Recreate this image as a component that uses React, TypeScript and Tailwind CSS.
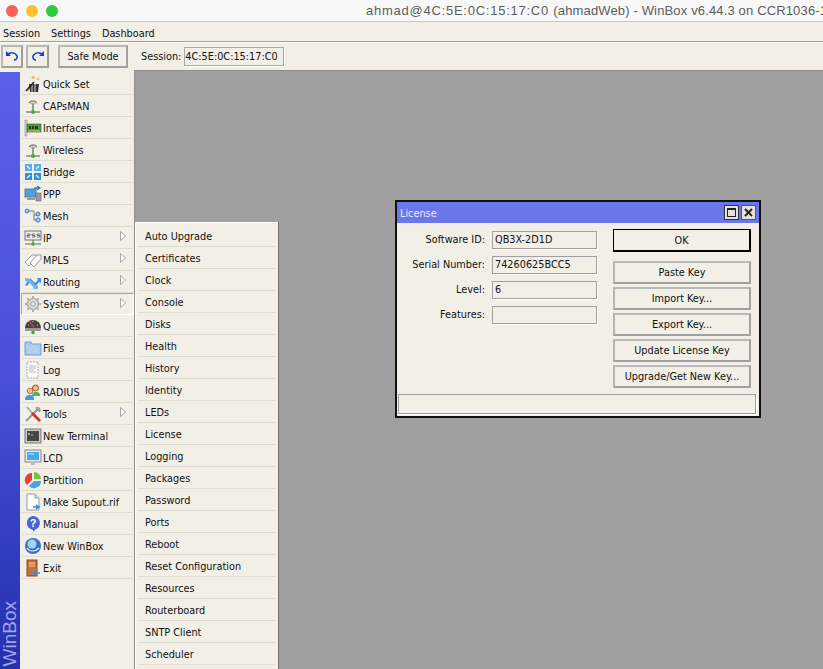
import React from "react";

const T = "[font-family:'DejaVu_Sans_Condensed','Noto_Sans',sans-serif]";

const S = ({ children }: { children: React.ReactNode }) => (
  <svg width="18" height="18" viewBox="0 0 18 18" className="shrink-0">{children}</svg>
);

const Antenna = () => (
  <S>
    <path d="M5 6a5 5 0 0 1 8 0" fill="none" stroke="#8a8a8a" strokeWidth="1.3" />
    <path d="M7 7a2.6 2.6 0 0 1 4 0" fill="none" stroke="#a0a0a0" strokeWidth="1.2" />
    <path d="M9 7v7" stroke="#777" strokeWidth="1.4" />
    <path d="M2 15h14" stroke="#555" />
    <circle cx="9" cy="15" r="2" fill="#3fae3a" />
  </S>
);

const icons: Record<string, React.ReactNode> = {
  "Quick Set": (
    <S>
      <path d="M5 9h10l-1 8H6z" fill="#333" />
      <path d="M8 9v8M11 9v8" stroke="#ddd" />
      <path d="M2 16L10 7" stroke="#222" strokeWidth="1.6" />
      <path d="M10 7l2-2" stroke="#eee" strokeWidth="1.6" />
      <path d="M9 0l1 2 2 .5-2 .5-1 2-.5-2-2-.5 2-.5zM14 2l.6 1.4 1.4.6-1.4.6-.6 1.4-.6-1.4-1.4-.6 1.4-.6z" fill="#f0b030" />
    </S>
  ),
  "CAPsMAN": <Antenna />,
  Interfaces: (
    <S>
      <path d="M1 1h2v16H1z" fill="#ddd" stroke="#888" strokeWidth=".6" />
      <rect x="3" y="5" width="14" height="8" fill="#4b9a4b" stroke="#2d6a2d" strokeWidth=".6" />
      <path d="M5 7h2v3H5zM8 7h2v3H8zM11 7h3v3h-3z" fill="#1d3d1d" />
      <path d="M4 12h12" stroke="#e0c040" />
    </S>
  ),
  Wireless: <Antenna />,
  Bridge: (
    <S>
      <rect x="1" y="1" width="7" height="7" fill="#58aee8" />
      <rect x="10" y="1" width="7" height="7" fill="#58aee8" />
      <rect x="1" y="10" width="7" height="7" fill="#2f8fd8" />
      <rect x="10" y="10" width="7" height="7" fill="#2f8fd8" />
      <path d="M3 3l3 3M15 3l-3 3M3 15l3-3M15 15l-3-3" stroke="#dff1ff" strokeWidth="1.4" />
    </S>
  ),
  PPP: (
    <S>
      <rect x="1" y="4" width="11" height="8" fill="#4aa0e0" stroke="#777" />
      <path d="M5 12v2h4v-2" fill="#aaa" />
      <rect x="12" y="8" width="5" height="8" fill="#999" stroke="#666" strokeWidth=".6" />
      <path d="M3 14h8" stroke="#999" strokeWidth="2" />
      <path d="M10 3h5M13 1l3 2-3 2" fill="none" stroke="#3080d0" strokeWidth="1.3" />
    </S>
  ),
  Mesh: (
    <S>
      <path d="M4 4h6v9h4M10 8h4" fill="none" stroke="#777" />
      <circle cx="3" cy="4" r="2" fill="#9cc8f4" stroke="#3a7fd0" />
      <circle cx="14" cy="7" r="2" fill="#9cc8f4" stroke="#3a7fd0" />
      <circle cx="14" cy="13" r="2.2" fill="#9cc8f4" stroke="#3a7fd0" />
    </S>
  ),
  IP: (
    <S>
      <rect x="1" y="2" width="16" height="9" fill="#eee" stroke="#777" />
      <path d="M3 5h3v1.500H3V8h3M8 5h3M8 5v1.500h3V8H8M13 5h3M13 5v1.500h3V8h-3" fill="none" stroke="#555" strokeWidth=".8" />
      <path d="M9 11v3M1 15h16" stroke="#666" />
      <circle cx="9" cy="15" r="1.800" fill="#3fae3a" />
    </S>
  ),
  MPLS: (
    <S>
      <path d="M1 11l7-7 4 0 0 4-7 7z" fill="#fff" stroke="#999" />
      <path d="M6 12l7-8 4 0 0 4-7 8z" fill="#f6f6f6" stroke="#999" />
    </S>
  ),
  Routing: (
    <S>
      <path d="M1 12l5-7 5 5 3-3-1-2 4 0 0 5-2-1-4 5-5-5-3 4z" fill="#3f8fdc" />
      <path d="M1 5l5 1 6 7 2-1v4l-5 0 1-1-5-6-4-1z" fill="#68b4ee" />
    </S>
  ),
  System: (
    <S>
      <circle cx="9" cy="9" r="5.500" fill="#ddd" stroke="#999" strokeWidth="1.200" />
      <circle cx="9" cy="9" r="2.200" fill="#f2efe7" stroke="#999" />
      <path d="M9 1v3M9 14v3M1 9h3M14 9h3M3.300 3.300l2 2M12.700 12.700l2 2M14.700 3.300l-2 2M5.300 12.700l-2 2" stroke="#aaa" strokeWidth="1.800" />
    </S>
  ),
  Queues: (
    <S>
      <path d="M1 11a8 8 0 0 1 16 0z" fill="#444" />
      <path d="M1 11h16v3H1z" fill="#999" />
      <path d="M5 4l5 6" stroke="#e04040" strokeWidth="1.200" />
      <path d="M4 8h1M13 8h1M9 4v1" stroke="#ccc" />
      <circle cx="9" cy="15.500" r="1.800" fill="#3fae3a" />
    </S>
  ),
  Files: (
    <S>
      <path d="M1 3h6l1 2h9v11H1z" fill="#a8cdf0" stroke="#6f9fd0" />
      <path d="M3 8h1M6 10h1M9 8h1M12 11h1M5 13h1M10 13h1" stroke="#e8f3fc" />
    </S>
  ),
  Log: (
    <S>
      <path d="M3 1h11v16H3z" fill="#fbfbfb" stroke="#aaa" strokeDasharray="2 1" />
      <path d="M5 5h7M5 7h7M5 9h5M5 11h7" stroke="#bbb" />
    </S>
  ),
  RADIUS: (
    <S>
      <circle cx="6" cy="8" r="2.800" fill="#f0c090" stroke="#553" strokeWidth=".6" />
      <path d="M1 17c0-4 2-5 5-5s4 1 4 5z" fill="#5090e0" />
      <circle cx="11.500" cy="5" r="3" fill="#f0c090" stroke="#b04020" />
      <path d="M8 13c0-3 1-4 4-4s4 1 4 4z" fill="#50b060" />
    </S>
  ),
  Tools: (
    <S>
      <path d="M2 16L14 4" stroke="#9a9a9a" strokeWidth="2.200" />
      <path d="M12 2.500a3 3 0 0 1 4 4l-2-.500-1.500-1.500z" fill="#aaa" stroke="#666" strokeWidth=".5" />
      <path d="M3 2l5 6" stroke="#aaa" strokeWidth="1.800" />
      <path d="M8 8l8 8" stroke="#d83030" strokeWidth="2.800" />
    </S>
  ),
  "New Terminal": (
    <S>
      <rect x="1" y="2" width="16" height="14" fill="#ccc" stroke="#777" />
      <rect x="3" y="4" width="12" height="10" fill="#444" />
      <path d="M4 6l2 1-2 1M7 8h2" stroke="#ddd" strokeWidth=".8" fill="none" />
    </S>
  ),
  LCD: (
    <S>
      <rect x="1" y="1" width="16" height="12" fill="#e8e8e8" stroke="#888" />
      <rect x="3" y="3" width="12" height="8" fill="#48a8e8" />
      <path d="M4 5h6" stroke="#c8e8fc" />
      <path d="M7 13h4v3H7z" fill="#bbb" />
    </S>
  ),
  Partition: (
    <S>
      <path d="M8 2a7 7 0 0 0-5 12l5-5z" fill="#e84040" />
      <path d="M10 1a7 7 0 0 1 7 7h-7z" fill="#80c040" />
      <path d="M10 10h7a7 7 0 0 1-12 5z" fill="#4aa0e0" />
    </S>
  ),
  "Make Supout.rif": (
    <S>
      <path d="M3 1h8l4 4v12H3z" fill="#fff" stroke="#999" />
      <path d="M11 1v4h4" fill="#ddd" stroke="#999" />
      <path d="M9 14h5M12 12l3 2-3 2" fill="none" stroke="#3a90e0" strokeWidth="1.600" />
    </S>
  ),
  Manual: (
    <S>
      <path d="M9 1a7 7 0 0 1 2 13.700L9 17v-2.100A7 7 0 0 1 9 1z" fill="#4a60d8" />
      <text x="9" y="12" fontSize="11" fontWeight="700" textAnchor="middle" fill="#fff" fontFamily="Liberation Sans">?</text>
    </S>
  ),
  "New WinBox": (
    <S>
      <circle cx="9" cy="9" r="8" fill="#3a70c8" />
      <circle cx="8" cy="7" r="4.500" fill="#a8d4f4" />
      <path d="M3 11c3 4 8 4 12 0" stroke="#e8f4fc" fill="none" strokeWidth="1.200" />
    </S>
  ),
  Exit: (
    <S>
      <rect x="3" y="1" width="10" height="16" fill="#c87038" stroke="#8a4820" />
      <rect x="5" y="3" width="6" height="5" fill="#e09a60" />
      <path d="M9 14h7M11 12l-3 2 3 2" fill="none" stroke="#3a90e0" strokeWidth="1.500" />
    </S>
  ),
};

const menu: [string, boolean][] = [
  ["Quick Set", false], ["CAPsMAN", false], ["Interfaces", false], ["Wireless", false], ["Bridge", false],
  ["PPP", false], ["Mesh", false], ["IP", true], ["MPLS", true], ["Routing", true], ["System", true],
  ["Queues", false], ["Files", false], ["Log", false], ["RADIUS", false], ["Tools", true], ["New Terminal", false],
  ["LCD", false], ["Partition", false], ["Make Supout.rif", false], ["Manual", false], ["New WinBox", false], ["Exit", false],
];

const sub = [
  "Auto Upgrade", "Certificates", "Clock", "Console", "Disks", "Health", "History", "Identity", "LEDs", "License",
  "Logging", "Packages", "Password", "Ports", "Reboot", "Reset Configuration", "Resources", "Routerboard",
  "SNTP Client", "Scheduler",
];

const Arrow = () => (
  <svg width="6" height="10" viewBox="0 0 6 10" className="absolute right-[7px] top-[4px]">
    <path d="M.5.500l5 4.500-5 4.500z" fill="#fff" stroke="#a8a8a8" />
  </svg>
);

const MenuRow = ({ name, more }: { name: string; more: boolean }) => {
  const active = name === "System";
  return (
    <div
      className={
        "relative flex h-[22px] items-center gap-[1px] " +
        (active
          ? "-mx-px border border-b-white border-l-[#a8a8a8] border-r-white border-t-[#a8a8a8] pl-[2px]"
          : "border-b border-b-[#dfdcd2] pl-[2px]")
      }
    >
      {icons[name]}
      <span className={"whitespace-nowrap " + (active ? "pt-[2px]" : "pt-[4px]")}>{name}</span>
      {more && <Arrow />}
    </div>
  );
};

const Btn = ({ children, primary }: { children: React.ReactNode; primary?: boolean }) => (
  <div
    className={
      "flex h-[23px] w-[138px] items-center justify-center " +
      (primary
        ? "border border-b-2 border-r-2 border-black pt-[2px]"
        : "border-2 border-b-[#a0a0a0] border-l-[#b4b4b4] border-r-[#a0a0a0] border-t-[#b8b8b8] pt-[1px]")
    }
  >
    {children}
  </div>
);

const Field = ({ label, value }: { label: string; value: string }) => (
  <div className="flex h-[19px] items-center">
    <span className="w-[83px] whitespace-nowrap pt-[2px] text-right">{label}</span>
    <div className="ml-[7px] flex h-[18px] w-[105px] items-center border border-[#a0a0a0] pl-[2px] pt-[1px] shadow-[1px_1px_0_#fff]">
      {value}
    </div>
  </div>
);

export default function App() {
  return (
    <div className={"flex h-[669px] w-[823px] flex-col overflow-hidden bg-[#f2efe7] text-[10.8px] text-[#111] " + T}>
      <div className="flex h-[22px] shrink-0 items-center border-b border-[#c9c9c9] bg-[#f8f8f8]">
        <div className="ml-[6px] flex gap-[8px]">
          <div className="h-[12px] w-[12px] rounded-full bg-[#fb5f57]" />
          <div className="h-[12px] w-[12px] rounded-full bg-[#fdc02e]" />
          <div className="h-[12px] w-[12px] rounded-full bg-[#2bc93f]" />
        </div>
        <div className="ml-[308px] min-w-0 flex-1 overflow-hidden whitespace-nowrap font-['Liberation_Sans',sans-serif] text-[13px] text-[#5c5c5c]">
          <span className="tracking-[0.75px]">ahmad@4C:5E:0C:15:17:C0 </span>
          <span className="tracking-[0.15px]">(ahmadWeb) - WinBox v6.44.3 on CCR1036-1</span>
        </div>
      </div>

      <div className="flex h-[20px] shrink-0 items-center gap-[11px] border-b border-b-[#9f9f9f] pl-[3px] pt-[5px] shadow-[0_1px_0_#fff]">
        <span>Session</span>
        <span>Settings</span>
        <span>Dashboard</span>
      </div>

      <div className="flex h-[28px] shrink-0 items-center pl-[1px]">
        <div className="flex h-[23px] w-[22px] items-center justify-center border-2 border-b-[#a0a0a0] border-l-[#b8b8b8] border-r-[#a0a0a0] border-t-[#b8b8b8]">
          <svg width="14" height="12" viewBox="0 0 14 12">
            <path d="M1 1v5h5" fill="#1a3cc8" />
            <path d="M2 5c3-3 8-3 10 1 .7 2-1 4-3 4" fill="none" stroke="#1a3cc8" strokeWidth="1.500" />
          </svg>
        </div>
        <div className="ml-[3px] flex h-[23px] w-[23px] items-center justify-center border-2 border-b-[#a0a0a0] border-l-[#b8b8b8] border-r-[#a0a0a0] border-t-[#b8b8b8]">
          <svg width="14" height="12" viewBox="0 0 14 12">
            <path d="M13 1v5H8" fill="#1a3cc8" />
            <path d="M12 5C9 2 4 2 2 6c-.7 2 1 4 3 4" fill="none" stroke="#1a3cc8" strokeWidth="1.500" />
          </svg>
        </div>
        <div className="ml-[9px] flex h-[23px] w-[70px] items-center justify-center border-2 border-b-[#a0a0a0] border-l-[#b8b8b8] border-r-[#a0a0a0] border-t-[#b8b8b8] pt-[3px]">
          Safe Mode
        </div>
        <span className="ml-[13px] pt-[3px]">Session:</span>
        <div className="ml-[3px] flex h-[19px] w-[100px] items-center border border-[#a8a8a8] pt-[2px] shadow-[1px_1px_0_#fff]">
          4C:5E:0C:15:17:C0
        </div>
      </div>

      <div className="relative flex min-h-0 flex-1">
        <div className="mt-[2px] flex w-[20px] shrink-0 items-end justify-center bg-gradient-to-b from-[#5a60ec] via-[#4a50da] to-[#2430ae] pb-[3px]">
          <span className="rotate-180 font-['Liberation_Sans',sans-serif] text-[19px] leading-[20px] text-[#a0a6e8] [writing-mode:vertical-rl]">
            WinBox
          </span>
        </div>
        <div className="w-[114px] shrink-0 pl-[2px] pr-[1px] pt-[3px]">
          {menu.map(([n, m]) => (
            <MenuRow key={n} name={n} more={m} />
          ))}
        </div>
        <div className="min-w-0 flex-1 border-l border-t border-[#8f8f8f] bg-[#a0a0a0]" />

        <div className="absolute left-[135px] top-[152px] w-[143px] border-l border-t border-white bg-[#f2efe7] pl-[2px] pr-[2px] pt-[2px] shadow-[1px_0_0_#6f6f6f]">
          {sub.map((s) => (
            <div key={s} className="flex h-[22px] items-center whitespace-nowrap border-b border-b-[#dfdcd2] pl-[7px] pt-[4px]">
              {s}
            </div>
          ))}
          <div className="h-[22px]" />
        </div>

        <div className="absolute left-[395px] top-[130px] flex h-[218px] w-[366px] flex-col border-2 border-[#111] bg-[#f2efe7]">
          <div className="flex h-[21px] shrink-0 items-center justify-between bg-[#6a76ea] pl-[3px] pr-[3px] text-[#e8eaff]">
            <span className="pt-[4px]">License</span>
            <div className="flex gap-[2px]">
              <div className="flex h-[15px] w-[15px] items-center justify-center border border-[#333] bg-[#e4e2dc]">
                <div className="h-[9px] w-[9px] border border-t-2 border-[#222]" />
              </div>
              <div className="flex h-[15px] w-[15px] items-center justify-center border border-[#555] bg-[#e4e2dc]">
                <svg width="9" height="9" viewBox="0 0 9 9">
                  <path d="M1 1l7 7M8 1l-7 7" stroke="#222" strokeWidth="2" />
                </svg>
              </div>
            </div>
          </div>
          <div className="flex min-h-0 flex-1 pl-[5px] pt-[6px]">
            <div className="flex flex-col gap-[6px] pt-[1px]">
              <Field label="Software ID:" value="QB3X-2D1D" />
              <Field label="Serial Number:" value="74260625BCC5" />
              <Field label="Level:" value="6" />
              <Field label="Features:" value="" />
            </div>
            <div className="ml-[16px] flex flex-col">
              <Btn primary>OK</Btn>
              <div className="mt-[9px] flex flex-col gap-[3px]">
                <Btn>Paste Key</Btn>
                <Btn>Import Key...</Btn>
                <Btn>Export Key...</Btn>
                <Btn>Update License Key</Btn>
                <Btn>Upgrade/Get New Key...</Btn>
              </div>
            </div>
          </div>
          <div className="mb-[2px] ml-[1px] mr-[3px] h-[20px] shrink-0 border border-[#a0a0a0] shadow-[1px_1px_0_#fff]" />
        </div>
      </div>
    </div>
  );
}
